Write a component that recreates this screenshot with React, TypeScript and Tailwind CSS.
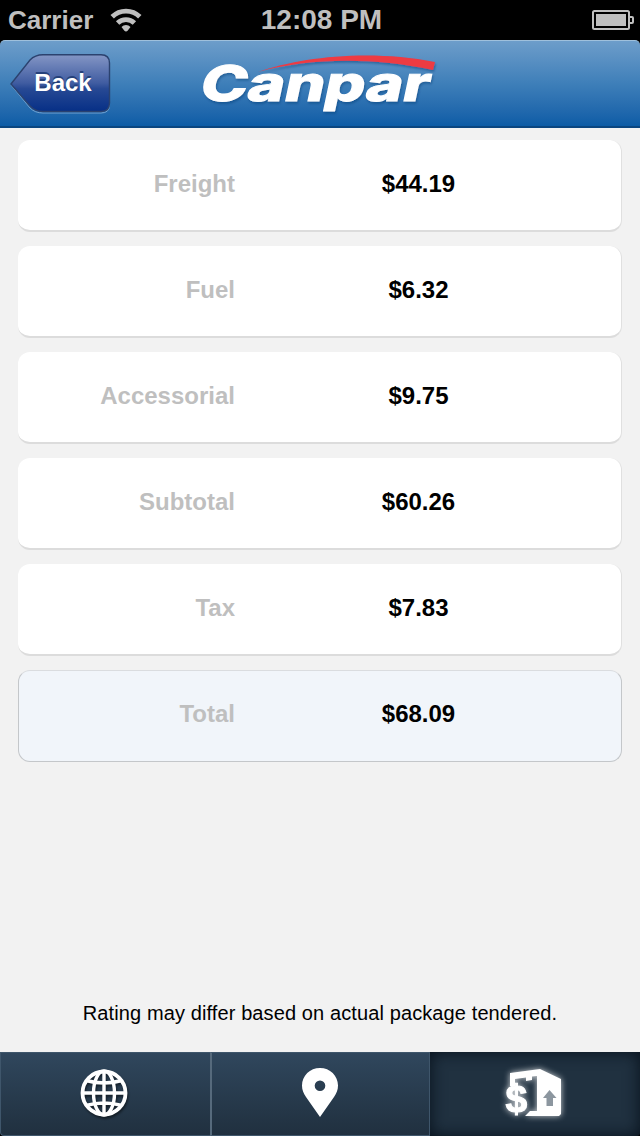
import clsx from "clsx";

const rows = [
  { label: "Freight", value: "$44.19" },
  { label: "Fuel", value: "$6.32" },
  { label: "Accessorial", value: "$9.75" },
  { label: "Subtotal", value: "$60.26" },
  { label: "Tax", value: "$7.83" },
  { label: "Total", value: "$68.09", total: true },
];

function StatusBar() {
  return (
    <div className="grid h-10 shrink-0 grid-cols-[1fr_auto_1fr] items-center bg-black text-[#bfbfbf]">
      <div className="flex items-center gap-[17px] pl-2">
        <span className="text-[26px] leading-10 font-bold">Carrier</span>
        <svg className="h-6 w-8" viewBox="0 0 32 24" fill="none" stroke="currentColor" strokeWidth="4.8">
          <path d="M2.200 8.800a19.500 19.500 0 0 1 27.600 0" />
          <path d="M7.600 15a12 12 0 0 1 16.800 0" />
          <path d="M16 23.500q-1 0-1.800-1L11.500 19a6.200 6.200 0 0 1 9 0L17.800 22.500q-.8 1-1.800 1z" fill="currentColor" stroke="none" />
        </svg>
      </div>
      <span className="ml-[3px] text-[28px] leading-10 font-bold">12:08 PM</span>
      <svg className="mr-[6px] h-5 w-[42px] justify-self-end" viewBox="0 0 42 20" fill="none" stroke="currentColor" strokeWidth="2">
        <rect x="1" y="1" width="36" height="18" rx="1.5" />
        <rect x="4" y="4" width="30" height="12" fill="currentColor" stroke="none" />
        <path d="M38 7h2q1 0 1 1v4q0 1-1 1h-2" />
      </svg>
    </div>
  );
}

function Logo() {
  return (
    <svg className="h-[60px] w-[240px] overflow-visible" viewBox="0 0 240 60">
      <defs>
        <filter id="logo-shadow" x="-5%" y="-10%" width="110%" height="130%">
          <feDropShadow dx="1" dy="2" stdDeviation="1" floodColor="#0b3c74" floodOpacity="0.45" />
        </filter>
      </defs>
      <g filter="url(#logo-shadow)">
        <path d="M57 18C99 3 169-5 234 8L232 16C170 3 109 4 57 18z" fill="#ee3a43" />
        <text
          x="0"
          y="0"
          transform="translate(-3 47) skewX(-12)"
          textLength="229"
          lengthAdjust="spacingAndGlyphs"
          className="fill-white stroke-white font-[Inter,Liberation_Sans,sans-serif] text-[49px] font-extrabold"
          strokeWidth="1"
        >
          Canpar
        </text>
      </g>
    </svg>
  );
}

function Header() {
  return (
    <div className="shrink-0 bg-black">
      <div className="flex h-[88px] items-start rounded-t-[5px] border-t border-b-2 border-t-[#9fc0dc] border-b-[#0a4680] bg-linear-to-b from-[#6d9dca] via-[#3e7fb9] to-[#0c5ca6]">
        <button className="relative mt-[13px] ml-[10px] h-[60px] w-[101px]">
          <svg className="absolute inset-0 size-full" viewBox="0 0 101 60">
            <defs>
              <linearGradient id="back" x1="0" y1="0" x2="0" y2="1">
                <stop offset="0" stopColor="#8496c5" />
                <stop offset="0.5" stopColor="#405ca1" />
                <stop offset="0.6" stopColor="#274994" />
                <stop offset="1" stopColor="#062f86" />
              </linearGradient>
            </defs>
            <path d="M1 31L20 7Q25 1.7 33 1.7H91Q99.500 1.700 99.500 10V51Q99.500 59 91 59H33Q25 59 20 54z" fill="none" stroke="#72a2d0" />
            <path d="M1 30L20 6Q25 .7 33 .7H91Q99.500 .7 99.500 9V49Q99.500 57.500 91 57.500H33Q25 57.500 20 52z" fill="url(#back)" stroke="#2b426f" strokeWidth="1.4" />
          </svg>
          <span className="relative -top-px block pl-[5px] text-[24px] leading-[56px] font-bold text-white [text-shadow:0_-2px_0_#25417a]">
            Back
          </span>
        </button>
        <div className="mt-[13px] ml-[90px]">
          <Logo />
        </div>
      </div>
    </div>
  );
}

function Row({ label, value, total }: { label: string; value: string; total?: boolean }) {
  return (
    <div
      className={clsx(
        "grid h-[92px] items-center rounded-xl border pb-1 text-[24px] font-bold",
        total
          ? "grid-cols-[216px_367px] border-[#c4c7ca] border-t-[#dadcdf] bg-[#f1f5fa]"
          : "grid-cols-[217px_367px] border-t-0 border-l-0 border-r-[#e0e0e0] border-b-2 border-b-[#dcdcdc] bg-white pt-px"
      )}
    >
      <span className="text-right text-[#bfbfbf]">{label}</span>
      <span className="text-center text-black">{value}</span>
    </div>
  );
}

function GlobeIcon() {
  return (
    <svg className="h-12 w-12 overflow-visible drop-shadow-[1px_2px_1px_#0007]" viewBox="0 0 48 48" fill="none" stroke="#fff" strokeWidth="3.800">
      <circle cx="24" cy="24" r="21.500" />
      <ellipse cx="24" cy="24" rx="10.500" ry="22" strokeWidth="3.400" />
      <path d="M24 2v44M2 24h44M6 11.500Q24 16.500 42 11.500M6 36.500Q24 31.500 42 36.500" strokeWidth="3.400" />
    </svg>
  );
}

function PinIcon() {
  return (
    <svg className="h-[50px] w-9" viewBox="0 0 36 50">
      <path
        d="M18 0C8 0 0 7.800 0 17.500C0 22 1.500 25 4 29L18 49L32 29C34.500 25 36 22 36 17.500C36 7.800 28 0 18 0zM18 12.500a5.300 5.300 0 1 1 0 10.600a5.300 5.300 0 0 1 0-10.600z"
        fill="#fff"
        fillRule="evenodd"
      />
    </svg>
  );
}

function RateIcon() {
  return (
    <svg className="h-[52px] w-[58px] overflow-visible drop-shadow-[0_0_3px_#fffc]" viewBox="0 0 58 52">
      <path d="M4 5L34 1L55 11V46L53 48H19L24 43H31V8L26 8.600V12L20 13V9.500L9 11V18H4z" fill="#fff" />
      <path d="M43.500 22L50.500 30H47V38H40.500V30H37z" fill="#8c969f" />
      <text x="-0.5" y="43.500" className="fill-white stroke-white font-[Liberation_Sans,Arial,sans-serif] text-[39px] font-bold" strokeWidth="1">
        $
      </text>
    </svg>
  );
}

function TabBar() {
  return (
    <div className="grid h-[84px] shrink-0 grid-cols-[210px_220px_210px] bg-black">
      <button className="flex items-center justify-center rounded-bl-[4px] border border-r-0 border-[#3f566b] bg-linear-to-b from-[#30475d] to-[#20303f] pr-1 pb-[2px]">
        <GlobeIcon />
      </button>
      <button className="flex items-center justify-center border border-l-2 border-[#3f566b] border-l-[#566a7c] bg-linear-to-b from-[#30475d] to-[#20303f] pr-[2px] pb-[2px]">
        <PinIcon />
      </button>
      <button className="flex items-center justify-center rounded-br-[4px] bg-[#203140] pb-px shadow-[inset_0_0_16px_#07111b]">
        <RateIcon />
      </button>
    </div>
  );
}

export default function App() {
  return (
    <div className="flex h-[1136px] w-[640px] flex-col overflow-hidden bg-[#f2f2f2] font-[Liberation_Sans,Arial,sans-serif]">
      <StatusBar />
      <Header />
      <div className="flex flex-1 flex-col px-[18px] pt-3">
        <div className="flex flex-col gap-[14px]">
          {rows.map((row) => (
            <Row key={row.label} {...row} />
          ))}
        </div>
        <p className="mt-auto mb-[23px] text-center text-[20px] leading-8 tracking-[0.11px] text-black">
          Rating may differ based on actual package tendered.
        </p>
      </div>
      <TabBar />
    </div>
  );
}
